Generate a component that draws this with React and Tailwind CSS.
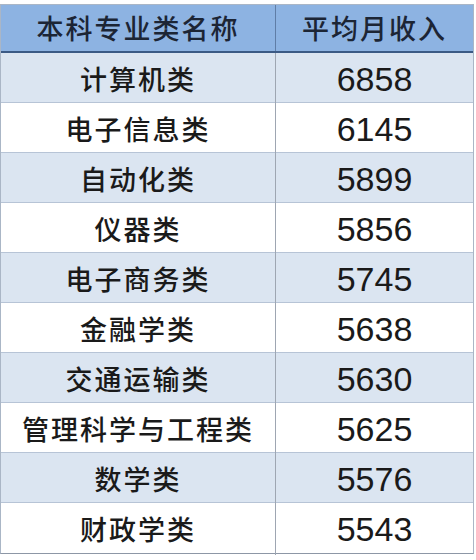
import React from "react";

const rows = [
  ["计算机类", "6858"],
  ["电子信息类", "6145"],
  ["自动化类", "5899"],
  ["仪器类", "5856"],
  ["电子商务类", "5745"],
  ["金融学类", "5638"],
  ["交通运输类", "5630"],
  ["管理科学与工程类", "5625"],
  ["数学类", "5576"],
  ["财政学类", "5543"],
];

const cn = { fontFamily: '"Noto Sans CJK SC", "Noto Sans", sans-serif' };
const num = { fontFamily: '"Liberation Sans", Arial, sans-serif' };

export default function App() {
  return (
    <div className="w-[476px] h-[560px] bg-white pt-[4px]">
      <div className="w-[474px] border border-[#aab6c6] border-b-[#8d97a6]">
        {/* Header */}
        <div className="grid grid-cols-[275px_1fr] h-[48px] bg-[#8db3e2] border-b-2 border-[#3b5a85] text-[#1c2535]">
          <div
            className="flex items-center justify-center text-[27px] font-medium tracking-[2px] border-r border-[#5f7da6]"
            style={cn}
          >
            本科专业类名称
          </div>
          <div
            className="flex items-center justify-center text-[27px] font-medium tracking-[2px]"
            style={cn}
          >
            平均月收入
          </div>
        </div>

        {/* Body */}
        {rows.map(([name, value], i) => (
          <div
            key={name}
            className={
              "grid grid-cols-[275px_1fr] h-[50px] text-[#1a1a1a] " +
              (i % 2 === 0 ? "bg-[#dbe5f1]" : "bg-white") +
              (i < rows.length - 1 ? " border-b border-[#b7c4d6]" : "")
            }
          >
            <div
              className="flex items-center justify-center text-[27px] font-medium tracking-[2px] border-r border-[#9ea6b2]"
              style={cn}
            >
              {name}
            </div>
            <div className="flex items-center justify-center text-[34px] pt-[1px]" style={num}>
              {value}
            </div>
          </div>
        ))}
      </div>
    </div>
  );
}
